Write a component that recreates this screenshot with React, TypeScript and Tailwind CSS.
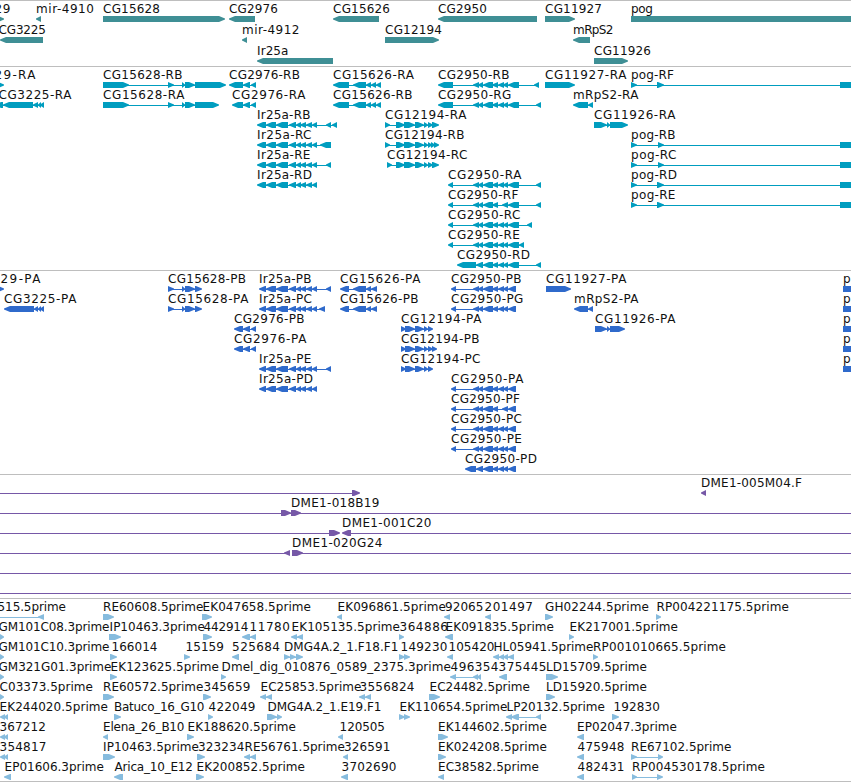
type Direction = 'L' | 'R';

// row, label, label left, label right, strand, blocks as "start-end" pairs
type Feature = [number, string, number, number, Direction, string];

type TrackData = {
  name: string;
  height: string;
  size: number;
  pitch: number;
  color: string;
  features: Feature[];
};

const TIP = 6;

const CG2950 = '473-479 478-483 483-493 492-498 498-504 503-508';
const IR25A = '266-276 276-288 289-296 296-301 300-306 306-312 312-317';
const CG12194 = '396-405 404-415 415-424 424-428 428-433 432-439';

const genes: Feature[] = [
  [0, '29', -5, 10, 'R', '-10-4'],
  [0, 'mir-4910', 36.5, 93.5, 'L', '36-41'],
  [0, 'CG15628', 103.5, 159.5, 'R', '103-225'],
  [0, 'CG2976', 229.5, 277.5, 'L', '229-255'],
  [0, 'CG15626', 333.5, 389.5, 'L', '333-379'],
  [0, 'CG2950', 438.5, 486.5, 'L', '438-537'],
  [0, 'CG11927', 545.5, 601.5, 'R', '545-575'],
  [0, 'pog', 631.5, 652.5, 'R', '631-870'],
  [1, 'CG3225', -1, 45.5, 'L', '0-43'],
  [1, 'mir-4912', 242.5, 299, 'L', '242-247'],
  [1, 'CG12194', 385.5, 441.5, 'R', '385-439'],
  [1, 'mRpS2', 573.5, 613, 'L', '573-590'],
  [2, 'Ir25a', 257.5, 288, 'L', '257-333'],
  [2, 'CG11926', 594.5, 650.5, 'R', '594-628'],
];

const transcripts: Feature[] = [
  [0, '29-RA', -5, 35, 'R', '-10-4'],
  [0, 'CG15628-RB', 103.5, 182, 'R', '103-129 168-174 182-185 185-195 195-226'],
  [0, 'CG2976-RB', 229.5, 299.5, 'L', '229-243 243-250 251-256'],
  [0, 'CG15626-RA', 333.5, 413.5, 'L', '333-349 353-366 366-371 371-376 376-381'],
  [0, 'CG2950-RB', 438.5, 509, 'L', `438-453 ${CG2950} 508-519 534-539`],
  [0, 'CG11927-RA', 545.5, 626, 'R', '545-575'],
  [0, 'pog-RF', 631.5, 673.5, 'R', '631-637 657-664 840-870'],
  [1, 'CG3225-RA', -1, 71, 'L', '-5-3 3-33 33-38 38-41 40-44'],
  [1, 'CG15628-RA', 103.5, 184, 'R', '103-129 168-174 182-185 185-195 195-219'],
  [1, 'CG2976-RA', 232.5, 305, 'L', '232-243 243-250 251-256'],
  [1, 'CG15626-RB', 333.5, 412, 'L', '333-349 353-366 366-371 371-376 376-381'],
  [1, 'CG2950-RG', 438.5, 511, 'L', `438-453 ${CG2950} 508-519 536-541`],
  [1, 'mRpS2-RA', 573.5, 638, 'L', '573-588 588-593'],
  [2, 'Ir25a-RB', 257.5, 310, 'L', `257-266 ${IR25A} 326-331 332-337`],
  [2, 'CG12194-RA', 385.5, 466, 'R', `385-390 ${CG12194}`],
  [2, 'CG11926-RA', 594.5, 675, 'R', '594-607 607-610 610-628'],
  [3, 'Ir25a-RC', 257.5, 311, 'L', `257-266 ${IR25A} 320-331`],
  [3, 'CG12194-RB', 385.5, 464, 'R', '385-390 396-405 404-415 415-424 424-428 428-432 431-435 434-439'],
  [3, 'pog-RB', 631.5, 675, 'R', '631-637 658-664 840-870'],
  [4, 'Ir25a-RE', 257.5, 310, 'L', `257-266 ${IR25A} 326-331`],
  [4, 'CG12194-RC', 387.5, 467, 'R', `387-392 ${CG12194}`],
  [4, 'pog-RC', 631.5, 676, 'R', '631-637 658-664 840-870'],
  [5, 'Ir25a-RD', 257.5, 311.5, 'L', `257-266 ${IR25A}`],
  [5, 'CG2950-RA', 448.5, 521, 'L', `448-453 ${CG2950} 508-519 536-541`],
  [5, 'pog-RD', 631.5, 676.5, 'R', '631-637 657-664 840-870'],
  [6, 'CG2950-RF', 448.5, 518, 'L', '448-453 473-479 478-483 483-493 492-498 502-508 508-519 536-541'],
  [6, 'pog-RE', 631.5, 675, 'R', '631-637 657-664 840-870'],
  [7, 'CG2950-RC', 448.5, 520, 'L', `448-453 ${CG2950} 508-519 527-532`],
  [8, 'CG2950-RE', 448.5, 519.5, 'L', `448-453 ${CG2950} 508-519 519-524`],
  [9, 'CG2950-RD', 457.5, 529.5, 'L', '457-476 476-483 483-493 492-498 498-504 503-508 508-519 536-541'],
];

const proteins: Feature[] = [
  [0, '29-PA', 1, 40, 'R', '-10-4'],
  [0, 'CG15628-PB', 168.5, 245.5, 'R', '168-174 182-185 185-195 195-202'],
  [0, 'Ir25a-PB', 259.5, 311, 'L', `259-266 ${IR25A} 326-331`],
  [0, 'CG15626-PA', 340.5, 420, 'L', '340-349 353-366 366-371 371-377'],
  [0, 'CG2950-PB', 451.5, 521, 'L', `451-456 ${CG2950} 508-516`],
  [0, 'CG11927-PA', 546.5, 626, 'R', '546-571'],
  [0, 'pog-PF', 843.5, 887, 'R', '843-870'],
  [1, 'CG3225-PA', 4.5, 76, 'L', '4-34 34-38 38-41 40-44'],
  [1, 'CG15628-PA', 168.5, 248, 'R', '168-174 182-185 185-195 195-202'],
  [1, 'Ir25a-PC', 259.5, 311.5, 'L', `259-266 ${IR25A} 319-325`],
  [1, 'CG15626-PB', 340.5, 418, 'L', '340-349 353-366 366-371 371-377'],
  [1, 'CG2950-PG', 451.5, 523, 'L', `451-456 ${CG2950} 508-516`],
  [1, 'mRpS2-PA', 574.5, 638, 'L', '574-588 588-593'],
  [1, 'pog-PB', 843.5, 887, 'R', '843-870'],
  [2, 'CG2976-PB', 234.5, 304, 'L', '234-243 243-250 251-256'],
  [2, 'CG12194-PA', 401.5, 481, 'R', '401-406 405-415 415-424 424-428 428-433'],
  [2, 'CG11926-PA', 595.5, 675, 'R', '595-607 607-610 610-625'],
  [2, 'pog-PC', 843.5, 887, 'R', '843-870'],
  [3, 'CG2976-PA', 234.5, 306, 'L', '234-243 243-250 251-256'],
  [3, 'CG12194-PB', 401.5, 479, 'R', '401-406 405-415 415-424 424-428 428-433 432-437'],
  [3, 'pog-PD', 843.5, 887, 'R', '843-870'],
  [4, 'Ir25a-PE', 259.5, 311, 'L', `259-266 ${IR25A} 326-331`],
  [4, 'CG12194-PC', 401.5, 480, 'R', '401-406 405-415 415-424 424-428 428-433'],
  [4, 'pog-PE', 843.5, 887, 'R', '843-870'],
  [5, 'Ir25a-PD', 259.5, 312.5, 'L', `259-266 ${IR25A}`],
  [5, 'CG2950-PA', 451.5, 523, 'L', `451-456 ${CG2950} 508-516`],
  [6, 'CG2950-PF', 451.5, 519.5, 'L', '451-456 473-479 478-483 483-493 492-498 502-508 508-516'],
  [7, 'CG2950-PC', 451.5, 521.5, 'L', `451-456 ${CG2950} 508-516`],
  [8, 'CG2950-PE', 451.5, 521.5, 'L', `451-456 ${CG2950} 508-516`],
  [9, 'CG2950-PD', 465.5, 536.5, 'L', '465-476 476-483 483-493 492-498 498-504 503-508 508-516'],
];

const clones: Feature[] = [
  [0, '', 0, 0, 'R', '-20--10 352-360'],
  [0, 'DME1-005M04.F', 701.5, 801.5, 'L', '701-706'],
  [1, 'DME1-018B19', 291.5, 379, 'R', '-20--10 281-291 291-301 880-890'],
  [2, '', 0, 0, 'R', '-20--10 329-340'],
  [2, 'DME1-001C20', 342.5, 431, 'L', '342-351 880-890'],
  [3, '', 0, 0, 'L', '-20--10 284-290'],
  [3, 'DME1-020G24', 292.5, 382, 'R', '292-303 880-890'],
  [4, '', 0, 0, 'R', '-20--10 880-890'],
  [5, '', 0, 0, 'R', '-20--10 880-890'],
];

const ests: Feature[] = [
  [0, '515.5prime', -2, 65.5, 'L', '-20--10 38-44'],
  [0, 'RE60608.5prime', 103.5, 203, 'R', '103-114'],
  [0, 'EK047658.5prime', 203, 310.5, 'R', '202-212'],
  [0, 'EK096861.5prime', 338, 445.5, 'L', '337-342'],
  [0, '92065', 445.5, 483, 'L', '444-450'],
  [0, '201497', 485, 532.5, 'L', '485-491'],
  [0, 'GH02244.5prime', 545.5, 648.5, 'R', '545-553'],
  [0, 'RP004221175.5prime', 657, 788.5, 'R', '656-661'],
  [1, 'GM101C08.3prime', -1, 109, 'R', '0-4'],
  [1, 'IP10463.3prime', 110, 204.5, 'R', '109-121'],
  [1, '442914', 204, 248, 'R', '203-212'],
  [1, '11780', 250, 289.5, 'L', '242-250 250-256'],
  [1, 'EK105135.5prime', 292, 399.5, 'L', '291-297 297-303'],
  [1, '364886', 400, 447.5, 'R', '399-404'],
  [1, 'EK091835.5prime', 446, 553.5, 'L', '445-453'],
  [1, 'EK217001.5prime', 570, 677.5, 'R', '569-574'],
  [2, 'GM101C10.3prime', -1, 109, 'R', '0-4'],
  [2, '166014', 112, 157, 'R', '110-117'],
  [2, '15159', 186, 223.5, 'R', '184-190'],
  [2, '525684', 232.5, 279.5, 'L', '232-239'],
  [2, 'DMG4A.2_1.F18.F1', 284.5, 398, 'R', '284-290 290-296 296-303'],
  [2, '149230', 401, 447, 'R', '399-405 404-410'],
  [2, '105420', 449, 494, 'L', '447-453'],
  [2, 'HL05941.5prime', 494, 593, 'L', '493-499 499-504 503-508 508-514'],
  [2, 'RP001010665.5prime', 593.5, 725.5, 'R', '593-598'],
  [3, 'GM321G01.3prime', -1, 111, 'R', '0-4'],
  [3, 'EK123625.5prime', 111, 218.5, 'R', '110-117'],
  [3, 'Dmel_dig_010876_0589_2375.3prime', 222, 450.5, 'R', '221-226'],
  [3, '496354', 451, 498, 'L', '450-456 473-478 477-481'],
  [3, '375445', 499, 546, 'L', '499-507'],
  [3, 'LD15709.5prime', 546.5, 646.5, 'R', '546-558'],
  [4, 'C03373.5prime', 0, 92.5, 'R', '0-4'],
  [4, 'RE60572.5prime', 103.5, 203, 'R', '103-114'],
  [4, '345659', 204, 250, 'R', '203-211'],
  [4, 'EC25853.5prime', 261, 361, 'L', '260-266 266-272'],
  [4, '3556824', 360, 414, 'L', '359-365 365-371'],
  [4, 'EC24482.5prime', 430, 529.5, 'R', '429-440'],
  [4, 'LD15920.5prime', 546.5, 646.5, 'R', '546-555'],
  [5, 'EK244020.5prime', 0, 107.5, 'L', '0-5 4-8'],
  [5, 'Batuco_16_G10', 114.5, 204, 'R', '114-121'],
  [5, '422049', 209, 255, 'R', '208-213'],
  [5, 'DMG4A.2_1.E19.F1', 268, 381, 'R', '267-277 277-282'],
  [5, 'EK110654.5prime', 400, 507, 'R', '399-405 404-410'],
  [5, 'LP20132.5prime', 507, 604.5, 'L', '506-512 511-519 536-541'],
  [5, '192830', 614, 659.5, 'R', '612-619'],
  [6, '367212', 0, 45.5, 'L', '0-5 4-8'],
  [6, 'Elena_26_B10', 103.5, 184, 'L', '103-108'],
  [6, 'EK188620.5prime', 188, 295.5, 'R', '187-194'],
  [6, '120505', 340, 384.5, 'L', '338-343'],
  [6, 'EK144602.5prime', 438.5, 546.5, 'R', '438-448'],
  [6, 'EP02047.3prime', 577.5, 676.5, 'L', '577-584'],
  [7, '354817', 0, 46, 'L', '0-5 4-8'],
  [7, 'IP10463.5prime', 103.5, 198.5, 'R', '103-115'],
  [7, '323234', 198.5, 244, 'R', '197-205'],
  [7, 'RE56761.5prime', 245, 344.5, 'L', '244-250 250-256'],
  [7, '326591', 344.5, 390, 'L', '343-348'],
  [7, 'EK024208.5prime', 438.5, 546.5, 'R', '438-446'],
  [7, '475948', 578, 624, 'L', '577-584'],
  [7, 'RE67102.5prime', 631.5, 731, 'R', '631-637 658-663'],
  [8, 'EP01606.3prime', 5, 103.5, 'L', '4-11'],
  [8, 'Arica_10_E12', 115, 192.5, 'L', '114-123'],
  [8, 'EK200852.5prime', 197, 304.5, 'R', '196-204'],
  [8, '3702690', 342, 396, 'L', '341-348'],
  [8, 'EC38582.5prime', 438.5, 538.5, 'L', '438-444'],
  [8, '482431', 578, 624, 'L', '577-584'],
  [8, 'RP004530178.5prime', 632.5, 764.5, 'R', '632-637 657-663'],
];

const tracks: TrackData[] = [
  { name: 'genes', height: 'h-[66px]', size: 66, pitch: 21, color: '#3f8f95', features: genes },
  { name: 'transcripts', height: 'h-[204px]', size: 204, pitch: 20, color: '#009dbf', features: transcripts },
  { name: 'proteins', height: 'h-[204px]', size: 204, pitch: 20, color: '#2f6acb', features: proteins },
  { name: 'clones', height: 'h-[124px]', size: 124, pitch: 20, color: '#7658a7', features: clones },
  { name: 'ests', height: 'h-[183px]', size: 183, pitch: 20, color: '#87bcde', features: ests },
];

function parseBlocks(blocks: string): [number, number][] {
  return blocks.split(' ').map((b) => {
    const m = b.match(/^(-?\d+)-(-?\d+)$/)!;
    return [Number(m[1]), Number(m[2])];
  });
}

// A block is a bar whose leading end narrows to a point on the strand's side.
function blockPath(a: number, b: number, y: number, dir: Direction) {
  const tip = Math.min(TIP, b - a);
  return dir === 'R'
    ? `M${a} ${y}H${b - tip}L${b} ${y + 2.5}V${y + 3.5}L${b - tip} ${y + 6}H${a}Z`
    : `M${b} ${y}H${a + tip}L${a} ${y + 2.5}V${y + 3.5}L${a + tip} ${y + 6}H${b}Z`;
}

function Glyph({ feature, pitch, color }: { feature: Feature; pitch: number; color: string }) {
  const [row, label, left, right, dir, spec] = feature;
  const top = row * pitch;
  const blocks = parseBlocks(spec);
  const first = blocks[0][0];
  const last = blocks[blocks.length - 1][1];
  return (
    <g>
      {blocks.length > 1 ? (
        <rect x={first + 1} y={top + 19} width={last - first - 2} height={1} fill={color} shapeRendering="crispEdges" />
      ) : null}
      {blocks.map(([a, b], i) => (
        <path key={i} d={blockPath(a, b, top + 16, dir)} fill={color} />
      ))}
      {label && (
        <text x={left - 0.4} y={top + 13} textLength={right - left + 0.8} lengthAdjust="spacing" fill="#111">
          {label}
        </text>
      )}
    </g>
  );
}

function Track({ track }: { track: TrackData }) {
  return (
    <section className={`w-full shrink-0 overflow-hidden ${track.height}`}>
      <svg
        className="block font-['DejaVu_Sans',sans-serif] text-[12px]"
        width={851}
        height={track.size}
        viewBox={`0 0 851 ${track.size}`}
        aria-label={track.name}
      >
        <rect x={0} y={0} width={851} height={1} fill="#bebebe" />
        {track.features.map((f, i) => (
          <Glyph key={i} feature={f} pitch={track.pitch} color={track.color} />
        ))}
      </svg>
    </section>
  );
}

export default function App() {
  return (
    <main className="flex h-[782px] w-[851px] flex-col overflow-hidden bg-white">
      {tracks.map((t) => (
        <Track key={t.name} track={t} />
      ))}
      <div className="h-px w-full bg-[#bebebe]" />
    </main>
  );
}
